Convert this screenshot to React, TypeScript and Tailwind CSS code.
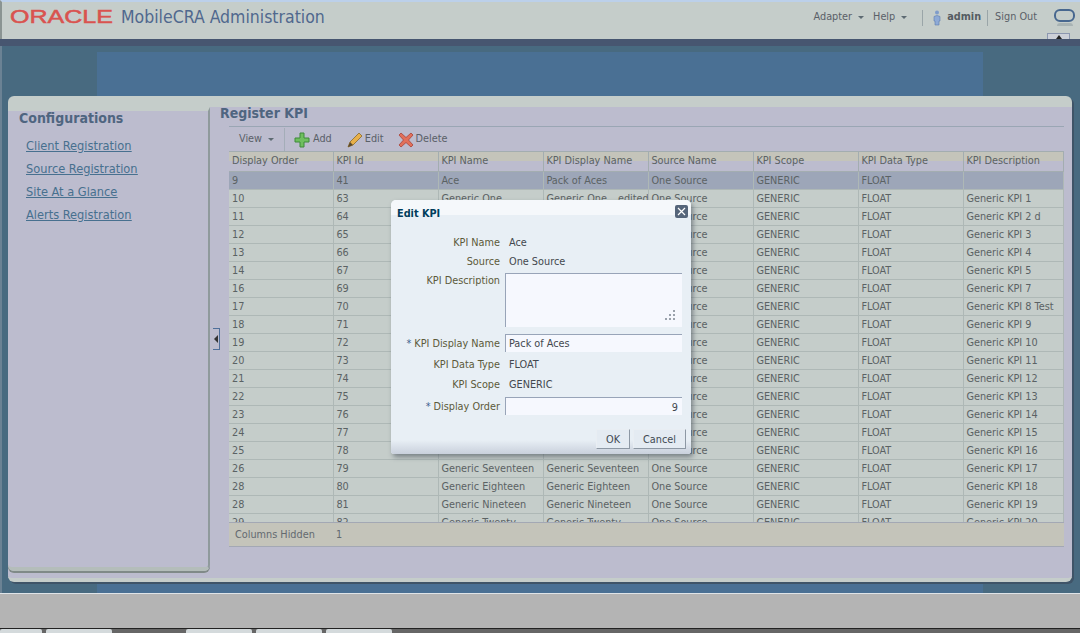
import React from "react";

const cols = "grid grid-cols-[105px_105px_105px_105px_105px_105px_105px_100px]";
const names = ["Ace","Generic One","Generic Two","Generic Three","Generic Four","Generic Five","Generic Seven","Generic Eight","Generic Nine","Generic Ten","Generic Eleven","Generic Twelve","Generic Thirteen","Generic Fourteen","Generic Fifteen","Generic Sixteen","Generic Seventeen","Generic Eighteen","Generic Nineteen","Generic Twenty"];
const orders = [9,10,11,12,13,14,16,17,18,19,20,21,22,23,24,25,26,28,28,29];
const ids = [41,63,64,65,66,67,69,70,71,72,73,74,75,76,77,78,79,80,81,82];
const descs = ["","Generic KPI 1","Generic KPI 2 d","Generic KPI 3","Generic KPI 4","Generic KPI 5","Generic KPI 7","Generic KPI 8 Test","Generic KPI 9","Generic KPI 10","Generic KPI 11","Generic KPI 12","Generic KPI 13","Generic KPI 14","Generic KPI 15","Generic KPI 16","Generic KPI 17","Generic KPI 18","Generic KPI 19","Generic KPI 20"];
const rows = orders.map((o, i) => [String(o), String(ids[i]), names[i], i === 0 ? "Pack of Aces" : i === 1 ? "Generic One _ edited" : names[i], "One Source", "GENERIC", "FLOAT", descs[i]]);
const heads = ["Display Order","KPI Id","KPI Name","KPI Display Name","Source Name","KPI Scope","KPI Data Type","KPI Description"];

function Caret() {
  return <span className="inline-block w-0 h-0 border-x-[3px] border-x-transparent border-t-[3px] border-t-[#5d6a72] ml-[6px] align-middle" />;
}

function Label({ children, star }: { children: React.ReactNode; star?: boolean }) {
  return (
    <div className="text-right text-[#5c5a3a] whitespace-nowrap">
      {star && <span className="text-[#3f5f8f] mr-[3px]">*</span>}
      {children}
    </div>
  );
}

export default function App() {
  return (
    <div className="relative w-[1080px] h-[633px] overflow-hidden flex flex-col bg-[#486a80] font-['DejaVu_Sans',sans-serif] [font-stretch:condensed] text-[10.8px] text-[#5b6264]">
      {/* header */}
      <div className="h-[39px] shrink-0 bg-[#c5cdca] border-t-2 border-t-[#bcd0ea] border-l-2 border-l-[#8a9492] flex items-center pl-[8px]">
        <svg width="104" height="20" className="shrink-0 mt-[-9px]">
          <text x="0" y="17" textLength="103" lengthAdjust="spacingAndGlyphs" fontFamily="'Liberation Sans', sans-serif" fontWeight="400" fontSize="19" fill="#d9534f" stroke="#d9534f" strokeWidth=".5">ORACLE</text>
        </svg>
        <div className="ml-[7px] mt-[-7px] text-[17.5px] text-[#50688e] whitespace-nowrap">MobileCRA Administration</div>
        <div className="ml-auto flex items-center mt-[-6px] h-[16px] text-[#5a6068]">
          <span>Adapter<Caret /></span>
          <span className="ml-[9px]">Help<Caret /></span>
          <span className="ml-[15px] h-[16px] w-px bg-[#9aa5a8]" />
          <svg width="8" height="16" viewBox="0 0 8 16" className="ml-[10px]">
            <circle cx="4" cy="2.5" r="2" fill="#7f9ccb" />
            <path d="M1 6.5 Q4 4.5 7 6.5 V11 H6 V15 H2 V11 H1 Z" fill="#8eaad6" stroke="#5f7db0" strokeWidth=".6" />
          </svg>
          <span className="ml-[6px] font-bold text-[#555c62]">admin</span>
          <span className="ml-[6px] h-[16px] w-px bg-[#9aa5a8]" />
          <span className="ml-[7px]">Sign Out</span>
          <span className="ml-[17px] mr-[5px] relative flex flex-col items-center">
            <span className="block w-[21px] h-[13px] rounded-[6px] border-[2px] border-[#47678f]" />
            <span className="block w-[16px] h-[3px] rounded-t-full bg-[#a8b3b4] mt-[1px]" />
          </span>
        </div>
      </div>
      <div className="h-[7px] shrink-0 bg-[#475670] relative">
        <div className="absolute right-[10px] top-[-6px] w-[23px] h-[6px] bg-[#ccd0d8] border border-[#8c97b0] border-b-0 flex items-center justify-center">
          <span className="w-0 h-0 border-x-[3px] border-x-transparent border-b-[4px] border-b-[#222]" />
        </div>
      </div>

      {/* main */}
      <div className="relative flex-1 flex flex-col px-[8px] pt-[50px] pb-[11px] border-l-2 border-l-[#6b8294] pl-[6px]">
        <div className="absolute left-[95px] right-[97px] top-[6px] bottom-0 bg-[#4a7094]" />
        <div className="relative flex-1 flex rounded-[6px] bg-[#bcbcce] border-t-[11px] border-t-[#c5cdca] border-b-[4px] border-b-[#c5cdca] shadow-[2px_2px_0_#3f5468]">
          {/* left pane */}
          <div className="w-[202px] shrink-0 mb-[7px] rounded-b-[6px] border-t-[4px] border-t-[#c5cdca] border-r-2 border-r-[#8f9a9c] border-b-[4px] border-b-[#b4bdba] shadow-[0_2px_0_#808a88] pl-[11px]">
            <div className="text-[14px] leading-[15px] font-bold text-[#4f6580]">Configurations</div>
            <div className="mt-[11px] ml-[7px] flex flex-col gap-[5px] text-[12.7px] leading-[18px] text-[#47708f] underline">
              <a>Client Registration</a>
              <a>Source Registration</a>
              <a>Site At a Glance</a>
              <a>Alerts Registration</a>
            </div>
          </div>
          {/* splitter */}
          <div className="w-[10px] shrink-0 flex items-center justify-end mb-[7px]">
            <div className="w-[7px] h-[22px] border-r border-y border-[#4f6f9a] bg-[#bcbcce] flex items-center justify-end pr-[1px]">
              <span className="w-0 h-0 border-y-[4px] border-y-transparent border-r-[4px] border-r-[#333]" />
            </div>
          </div>
          {/* content */}
          <div className="flex-1 min-w-0 pr-[8px] flex flex-col">
            <div className="h-[19px] leading-[13px] text-[14px] font-bold text-[#4f6580]">Register KPI</div>
            <div className="ml-[9px] flex flex-col">
              <div className="h-[25px] pt-[1px] border-t border-t-[#9aa6b4] flex items-center text-[#5a6068]">
                <span className="w-[55px] pl-[10px] whitespace-nowrap">View<Caret /></span>
                <span className="w-px h-[24px] bg-[#a4adb8]" />
                <svg width="16" height="16" viewBox="0 0 16 16" className="ml-[9px]">
                  <path d="M6 1 H10 V6 H15 V10 H10 V15 H6 V10 H1 V6 H6 Z" fill="#6fbf5f" stroke="#3f8a3a" />
                </svg>
                <span className="ml-[3px]">Add</span>
                <svg width="16" height="16" viewBox="0 0 16 16" className="ml-[15px]">
                  <path d="M1 15 L3 10 L12 1 L15 4 L6 13 Z" fill="#e8b04a" stroke="#8a6a2a" strokeWidth=".8" />
                  <path d="M1 15 L3 10 L6 13 Z" fill="#5a4a30" />
                </svg>
                <span className="ml-[2px]">Edit</span>
                <svg width="16" height="16" viewBox="0 0 16 16" className="ml-[14px]">
                  <path d="M3 1 L8 5.5 L13 1 L15 3 L10.5 8 L15 13 L13 15 L8 10.5 L3 15 L1 13 L5.5 8 L1 3 Z" fill="#e2705a" stroke="#a8433a" strokeWidth=".8" />
                </svg>
                <span className="ml-[2px]">Delete</span>
              </div>
              <div className={`${cols} h-[21px] border-y border-y-[#a3adb0]`}>
                {heads.map((h, j) => (
                  <div key={h} className={`bg-[linear-gradient(#c4c4ba_0,#c4c4ba_50%,#bcbcce_50%,#bcbcce_100%)] border-r border-r-[#a3adb0] leading-[18px] whitespace-nowrap overflow-hidden ${j === 0 ? "pl-[3px]" : "pl-[2.4px]"}`}>{h}</div>
                ))}
              </div>
              <div className="h-[350px] overflow-hidden bg-[#c5cdca]">
                {rows.map((r, i) => (
                  <div key={i} className={`${cols} h-[18px] border-b border-b-[#aeb8b6] ${i === 0 ? "bg-[#9da6b8]" : ""}`}>
                    {r.map((c, j) => (
                      <div key={j} className={`border-r border-r-[#aeb8b6] leading-[18px] whitespace-nowrap overflow-hidden ${j === 0 ? "pl-[3px]" : "pl-[2.4px]"}`}>{c}</div>
                    ))}
                  </div>
                ))}
              </div>
              <div className="h-[25px] pt-[1px] bg-[#c4c4ba] border-y border-y-[#a3a8b4] flex items-center pl-[6px] text-[#636a70]">
                <span className="w-[101px]">Columns Hidden</span>
                <span>1</span>
              </div>
            </div>
          </div>
        </div>
      </div>

      {/* bottom */}
      <div className="h-[35px] shrink-0 bg-[#b4b4b4] border-t border-t-[#dfe4e8]" />
      <div className="h-[5px] shrink-0 bg-[#666] border-t border-t-[#222] flex">
        {[[0, 42], [4, 66], [74, 66], [4, 66], [4, 66]].map(([ml, w], i) => (
          <div key={i} style={{ marginLeft: ml, width: w }} className="h-full bg-[#d4dadc] rounded-t-[2px]" />
        ))}
      </div>

      {/* dialog */}
      <div className="absolute left-[391px] top-[200px] w-[300px] h-[254px] rounded-t-[5px] rounded-b-[3px] bg-[#e8eff5] shadow-[2px_3px_5px_rgba(60,70,80,.55)] flex flex-col">
        <div className="h-[20px] shrink-0 rounded-t-[5px] bg-[linear-gradient(#f5f8fb_0,#f5f8fb_75%,#e8eff5_75%)] flex items-start justify-between pl-[6px] pr-[3px] pt-[5px]">
          <span className="font-bold text-[#003d5c] leading-[17px]">Edit KPI</span>
          <span className="w-[13px] h-[13px] rounded-[2px] bg-[#55657a] flex items-center justify-center">
            <svg width="9" height="9" viewBox="0 0 9 9"><path d="M1 1 L8 8 M8 1 L1 8" stroke="#fff" strokeWidth="1.2" /></svg>
          </span>
        </div>
        <div className="grid grid-cols-[109px_1fr] gap-x-[5px] pr-[9px] leading-[14px] text-[#43484e] mt-[16px] items-start">
          <div className="col-span-2 grid grid-cols-subgrid h-[19px]"><Label>KPI Name</Label><div className="pl-[4px]">Ace</div></div>
          <div className="col-span-2 grid grid-cols-subgrid h-[19px]"><Label>Source</Label><div className="pl-[4px]">One Source</div></div>
          <div className="col-span-2 grid grid-cols-subgrid h-[60px]">
            <Label>KPI Description</Label>
            <div className="relative h-[54px] mt-[-1px] bg-[#f6f8fe] border-t border-l border-t-[#98a4b8] border-l-[#98a4b8]">
              <svg width="12" height="12" className="absolute right-[6px] bottom-[6px]" viewBox="0 0 12 12" fill="#9aa2ac">
                <rect x="9" y="1" width="2" height="2" /><rect x="5" y="5" width="2" height="2" /><rect x="9" y="5" width="2" height="2" /><rect x="1" y="9" width="2" height="2" /><rect x="5" y="9" width="2" height="2" /><rect x="9" y="9" width="2" height="2" />
              </svg>
            </div>
          </div>
          <div className="col-span-2 grid grid-cols-subgrid h-[23px]">
            <div className="leading-[20px]"><Label star>KPI Display Name</Label></div>
            <div className="h-[18px] bg-[#f6f8fe] border-t border-l border-t-[#98a4b8] border-l-[#98a4b8] pl-[3px] leading-[17px]">Pack of Aces</div>
          </div>
          <div className="col-span-2 grid grid-cols-subgrid h-[20px] pt-[1px]"><Label>KPI Data Type</Label><div className="pl-[4px]">FLOAT</div></div>
          <div className="col-span-2 grid grid-cols-subgrid h-[20px] pt-[1px]"><Label>KPI Scope</Label><div className="pl-[4px]">GENERIC</div></div>
          <div className="col-span-2 grid grid-cols-subgrid h-[18px]">
            <div className="leading-[20px]"><Label star>Display Order</Label></div>
            <div className="h-[18px] bg-[#f6f8fe] border-t border-l border-t-[#98a4b8] border-l-[#98a4b8] pr-[4px] text-right leading-[19px]">9</div>
          </div>
        </div>
        <div className="mt-auto relative h-[34px]">
          <div className="absolute inset-x-0 bottom-0 h-[14px] bg-[linear-gradient(#e8eff5,#c9d0dc)] rounded-b-[3px]" />
          <div className="relative flex justify-end gap-[3px] pr-[5px] pt-[9px] text-[#3f4a52]">
            <span className="w-[34px] h-[20px] pt-[2px] bg-[#e4ebf2] border border-[#e9eef3] border-r-[#8d98a4] border-b-[#8d98a4] flex items-center justify-center">OK</span>
            <span className="w-[53px] h-[20px] pt-[2px] bg-[#e4ebf2] border border-[#e9eef3] border-r-[#8d98a4] border-b-[#8d98a4] flex items-center justify-center">Cancel</span>
          </div>
        </div>
      </div>
    </div>
  );
}
